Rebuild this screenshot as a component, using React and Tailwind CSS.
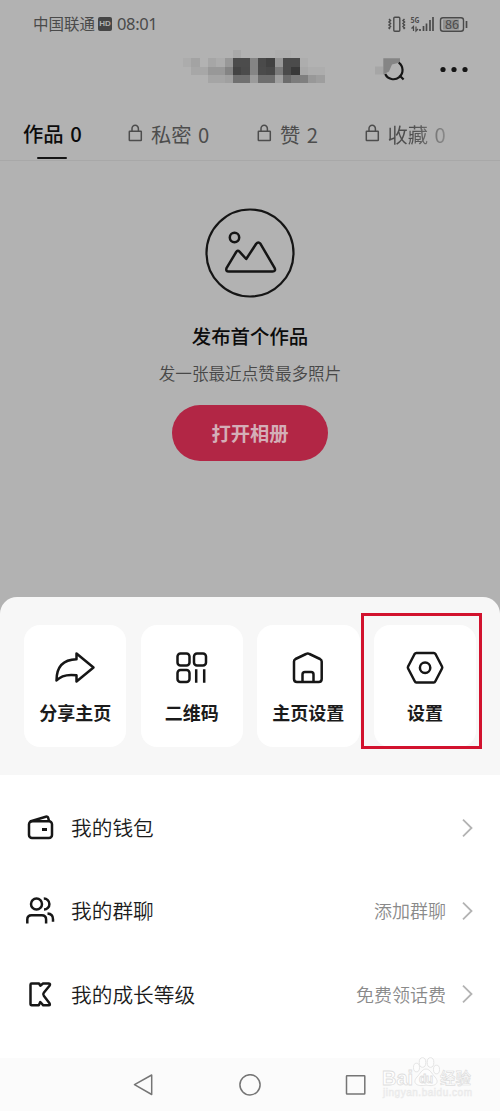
import React from "react";

const TILE = 25 / 3;
const MOSAIC = [
  ["", "", "", "", "", "", "#a9a9a9", "", "", "", "", "#afafaf", "#afafaf", "", "", "", ""],
  ["#acacac", "#a3a3a3", "", "#a6a6a6", "#acacac", "#989898", "#4c4c4c", "#4c4c4c", "#858585", "#4a4a4a", "#414141", "#979797", "#4b4b4b", "#4b4b4b", "#adadad", "", ""],
  ["", "#a7a7a7", "#a7a7a7", "#989898", "#989898", "#848484", "#444444", "#4b4b4b", "#858585", "#4b4b4b", "#484848", "#7b7b7b", "#4b4b4b", "#393939", "#a8a8a8", "#adadad", "#adadad"],
  ["", "", "", "#a5a5a5", "#a5a5a5", "#a0a0a0", "#707070", "#707070", "#9b9b9b", "#6e6e6e", "#6e6e6e", "#a0a0a0", "#6c6c6c", "#7c7c7c", "#7f7f7f", "#989898", "#9e9e9e"],
];

function StatusBar() {
  return (
    <div className="flex h-[48px] items-center pl-[33px] pr-[31px] text-[#4a4a4a]">
      <span className="text-[15.5px] leading-none">中国联通</span>
      <span className="ml-[3px] flex h-[14px] w-[14px] items-center justify-center rounded-[2px] bg-[#454545] font-['Liberation_Sans'] text-[8px] font-bold leading-none text-[#b2b2b2]">HD</span>
      <span className="ml-[5px] font-['Noto_Sans'] text-[16.5px] leading-none tracking-[-0.35px]">08:01</span>
      <svg className="ml-auto" width="82" height="18" viewBox="387 15 82 18" fill="none" stroke="currentColor">
        <rect x="393.8" y="17.3" width="6" height="14" rx="1" strokeWidth="1.4" />
        <path d="M389 19l1.5 1.5-1.5 1.5 1.5 1.5-1.5 1.5 1.5 1.5-1.5 1.5 1 1M404.500 19l-1.500 1.500 1.500 1.500-1.500 1.500 1.500 1.500-1.500 1.500 1.500 1.500-1 1" strokeWidth="1.5" />
        <text x="410.500" y="23" fontSize="8" fontWeight="700" fill="currentColor" stroke="none" textLength="9" lengthAdjust="spacingAndGlyphs">5G</text>
        <path d="M413.500 31v-4.500l-2 2M416 26.500v4.500l2-2" strokeWidth="1.2" />
        <path d="M420 29v2M423.500 26v5M426.500 23.500v7.500M430 20v11M433 17v14" strokeWidth="1.700" />
        <rect x="440.500" y="17.800" width="23" height="13.500" rx="2.500" strokeWidth="1.400" />
        <rect x="443" y="19.500" width="16" height="10" fill="#919191" stroke="none" />
        <path d="M466.500 21v7" strokeWidth="1.700" />
        <text x="445" y="28.800" fontSize="12" fill="currentColor" stroke="none" textLength="14" lengthAdjust="spacingAndGlyphs">86</text>
      </svg>
    </div>
  );
}

function Header() {
  return (
    <div className="flex h-[52px] pl-[183px] pt-[2px]">
      <svg width="150" height="34" viewBox="0 0 150 34" shapeRendering="crispEdges">
        {MOSAIC.map((row, y) =>
          row.map((fill, x) =>
            fill ? <rect key={`${x}-${y}`} x={x * TILE} y={y * TILE} width={TILE} height={TILE} fill={fill} /> : null
          )
        )}
      </svg>
      <svg className="ml-[42px]" width="34" height="34" viewBox="375 50 34 34" fill="none">
        <path d="M375 66.500h8.300v8h-8.300z" fill="#a6a6a6" />
        <path d="M383.300 58.300H400v4.300l-8 2-3 7-5.700 3z" fill="#858585" />
        <path d="M398.700 62.700A9.100 9.100 0 1 1 385.200 74M399.300 75.200l4.300 4.300" stroke="#151515" strokeWidth="2.200" />
      </svg>
      <svg className="ml-[31px] mt-[16px]" width="30" height="8" fill="#151515">
        <circle cx="3" cy="3.500" r="2.600" />
        <circle cx="14" cy="3.500" r="2.600" />
        <circle cx="25" cy="3.500" r="2.600" />
      </svg>
    </div>
  );
}

function Lock() {
  return (
    <svg className="mr-[8px] mt-[-1px] shrink-0" width="15" height="18" fill="none" stroke="currentColor" strokeWidth="1.500">
      <rect x="1.300" y="7.300" width="12" height="9.200" rx="0.500" />
      <path d="M4 7.300V4.800a3.200 3.500 0 0 1 6.400 0v2.500" />
    </svg>
  );
}

function Tabs() {
  return (
    <div className="relative flex h-[61px] border-b border-[#a8a8a8] pl-[23px] text-[20.300px] leading-[66px] text-[#4d4d4d] [word-spacing:2px]">
      <div className="relative w-[105px] font-medium text-[#0c0c0c]">
        作品 0
        <i className="absolute bottom-[1px] left-[14px] h-[2.500px] w-[30px] rounded bg-[#151515]" />
      </div>
      <div className="flex w-[129px] items-center pt-[7px]"><Lock /><span>私密 0</span></div>
      <div className="flex w-[107.500px] items-center pt-[7px]"><Lock /><span>赞 2</span></div>
      <div className="flex items-center pt-[7px]"><Lock /><span className="bg-linear-to-r from-[#4d4d4d] from-40% to-[#8b8b8b] bg-clip-text text-transparent">收藏 0</span></div>
    </div>
  );
}

function EmptyState() {
  return (
    <div className="flex flex-col items-center pt-[47px]">
      <svg width="90" height="90" viewBox="0 0 90 90" fill="none" stroke="#151515" strokeWidth="2.200" strokeLinejoin="round">
        <circle cx="45" cy="45" r="43.500" />
        <circle cx="29.500" cy="29.500" r="4.700" strokeWidth="2.500" />
        <path d="M21.500 60.200L31.200 44Q32.700 41.800 34.500 43.700L41.200 51L51.200 35.800Q53.300 33 55.500 35.800L69.700 60.200Q71 63.500 67.500 63.500H23.800Q20.500 63.500 21.500 60.200Z" strokeWidth="2.500" />
      </svg>
      <h1 className="mt-[23px] text-[19.400px] font-medium leading-[30px] text-[#0c0c0c]">发布首个作品</h1>
      <p className="mt-[9px] text-[16.600px] font-[350] leading-[26px] text-[#484848]">发一张最近点赞最多照片</p>
      <button className="mt-[19px] h-[56px] w-[156px] rounded-full bg-[#b22645] text-[19.300px] font-bold text-[#d4aeb7]">打开相册</button>
    </div>
  );
}

const ACTIONS = [
  ["分享主页", <path d="M4.500 31.500C4.500 18 10.500 10.500 24.500 10.200V4.500L41.500 18.500L24.500 32.500V26.300C15 25 9 26.500 4.500 31.500Z" />],
  ["二维码", <><rect x="8.500" y="4.500" width="12" height="12" rx="3" /><rect x="25" y="4.500" width="12" height="12" rx="3" /><rect x="8.500" y="21" width="12" height="12" rx="3" /><path d="M27.200 20.300v13.500M35.200 20.300v13.500" /></>],
  ["主页设置", <><path d="M9 12.500Q9 11 10.500 10L21 5Q22.800 4 24.500 5L35 10Q36.700 11 36.700 12.500V30Q36.700 33 33.700 33H12Q9 33 9 30Z" /><path d="M17.500 33V25.500Q17.500 23 20 23H26Q28.500 23 28.500 25.500V33" /></>],
  ["设置", <><path d="M14.300 4H31.800Q32.800 4 33.500 5L40 17.500Q40.500 18.500 40 19.500L33.500 32Q32.800 33.500 31.800 33.500H14.300Q13.300 33.500 12.600 32L6.100 19.500Q5.600 18.500 6.100 17.500L12.600 5Q13.300 4 14.300 4Z" /><circle cx="23.100" cy="18.800" r="5.200" /></>],
];

function Actions() {
  return (
    <div className="relative flex h-[178px] gap-[14.200px] rounded-t-[17px] bg-[#f7f7f7] pl-[24px] pt-[28px]">
      {ACTIONS.map(([label, icon]) => (
        <div key={label} className="flex h-[122px] w-[102.400px] shrink-0 flex-col items-center rounded-[16px] bg-white pt-[24px]">
          <svg width="46" height="38" viewBox="0 0 46 38" fill="none" stroke="#161616" strokeWidth="2.500" strokeLinejoin="round">{icon}</svg>
          <span className="mt-[12px] text-[18px] font-bold leading-[27px] text-[#1b1b1b]">{label}</span>
        </div>
      ))}
      <div className="absolute left-[361px] top-[16px] h-[136px] w-[121px] border-3 border-[#d2122e]" />
    </div>
  );
}

const ROWS = [
  ["我的钱包", "", <><rect x="4" y="9.200" width="23" height="16.800" rx="3" /><path d="M5 9.500L20.800 4.700Q22.800 4.200 23.300 6.200L24 9" /><path d="M17 17.500h5" strokeWidth="3" /></>],
  ["我的群聊", "添加群聊", <><circle cx="11.500" cy="9" r="5.500" /><path d="M18.800 3.500A5.500 5.500 0 0 1 19 14.500M2.300 28.500V24.500Q2.300 20.200 6.600 20.200H16.800Q21.100 20.200 21.100 24.500V28.500M22.500 18.500Q28 18.900 28 24.200V26.700" /></>],
  ["我的成长等级", "免费领话费", <path d="M5.500 5.700Q5.500 4.500 6.700 4.500H14L15.300 6.700L18 4.500H23.800Q25.800 4.800 24.500 6.800L18.800 13.800Q17.600 15.300 18.800 16.800L24.500 24.300Q25.500 26.300 23.800 26.300H18.300L15.300 23L13.800 26.300H6.700Q5.500 26.300 5.500 24.800Z" />],
];

function Menu() {
  return (
    <div className="h-[283px] bg-white pt-[11px]">
      {ROWS.map(([label, note, icon]) => (
        <div key={label} className="flex h-[83.300px] items-center pl-[25px] pr-[27px]">
          <svg width="31" height="31" viewBox="0 0 31 31" fill="none" stroke="#171717" strokeWidth="2.500" strokeLinejoin="round">{icon}</svg>
          <span className="ml-[15px] text-[20.700px] font-[350] text-[#1b1b1b]">{label}</span>
          <span className="ml-auto text-[18px] font-[350] text-[#8a8a8a]">{note}</span>
          <svg className="ml-[16px]" width="11" height="20" fill="none" stroke="#b3b3b3" strokeWidth="1.800"><path d="M1 1.700L9.500 10L1 18.300" /></svg>
        </div>
      ))}
    </div>
  );
}

function Watermark() {
  return (
    <svg className="absolute left-[380px] top-[-2px]" width="96" height="48" viewBox="380 1056 96 48" fill="#fff" stroke="#dedede" strokeWidth="0.800">
      <text x="382" y="1085" fontSize="20" fontWeight="700" textLength="31" lengthAdjust="spacingAndGlyphs" className="font-['Liberation_Sans']">Bai</text>
      <g fill="#fdfdfd">
        <ellipse cx="416.500" cy="1067.500" rx="3" ry="4.300" />
        <ellipse cx="422.500" cy="1062.500" rx="3.300" ry="4.800" />
        <ellipse cx="430.500" cy="1062.500" rx="3.300" ry="4.800" />
        <ellipse cx="436.500" cy="1069.500" rx="3" ry="4.300" />
        <path d="M426 1069C422 1069 420 1074 417 1077C411 1084 419 1087 426 1085C433 1087 441 1084 435 1077C432 1074 430 1069 426 1069Z" />
      </g>
      <text x="419" y="1083" fontSize="12" fontWeight="700" textLength="14" className="font-['Liberation_Sans']">du</text>
      <text x="440" y="1083.500" fontSize="15.500" fontWeight="500" strokeWidth="0.700">经验</text>
      <text x="383" y="1096" fontSize="10" textLength="89" fill="#f4f4f4" stroke="#e9e9e9" strokeWidth="0.500" className="font-['Liberation_Sans']">jingyan.baidu.com</text>
    </svg>
  );
}

function NavBar() {
  return (
    <div className="relative flex h-[53px] items-center justify-center gap-[84px] bg-[#fbfbfb]">
      <svg width="22" height="22" fill="none" stroke="#757575" strokeWidth="1.500" strokeLinejoin="round"><path d="M1.500 10.700L18.700 1V20.500Z" /></svg>
      <svg width="22" height="22" fill="none" stroke="#757575" strokeWidth="1.500"><circle cx="11" cy="10.800" r="10.100" /></svg>
      <svg width="22" height="22" fill="none" stroke="#757575" strokeWidth="1.500"><rect x="1.500" y="1.700" width="18.300" height="18.300" rx="0.500" /></svg>
      <Watermark />
    </div>
  );
}

export default function App() {
  return (
    <div className="h-[1111px] w-[500px] overflow-hidden bg-[#b2b2b2] font-['Noto_Sans_CJK_SC',sans-serif]">
      <div className="h-[597px]">
        <StatusBar />
        <Header />
        <Tabs />
        <EmptyState />
      </div>
      <Actions />
      <Menu />
      <NavBar />
    </div>
  );
}
